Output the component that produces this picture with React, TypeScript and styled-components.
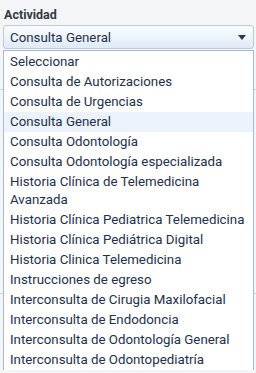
import React from "react";
import styled, { createGlobalStyle } from "styled-components";

const Global = createGlobalStyle`
  html, body { margin: 0; padding: 0; background: #f3f5f7; }
  body { font-family: Roboto, "Liberation Sans", Arial, sans-serif; }
`;

const Page = styled.div`
  position: relative;
  width: 256px;
  height: 373px;
  overflow: hidden;
`;

const Field = styled.div`
  display: flex;
  flex-direction: column;
  padding: 7px 2px 0 3px;
`;

const Label = styled.label`
  font-family: Roboto, "Liberation Sans", Arial, sans-serif;
  font-weight: 700;
  font-size: 12.5px;
  line-height: 15px;
  color: #333a44;
  padding-left: 1px;
  margin-bottom: 3px;
`;

const SelectBox = styled.div`
  height: 22px;
  border: 1px solid #bccadb;
  border-radius: 3px;
  background: linear-gradient(to bottom, #fbfdff 0%, #eef4fb 50%, #dfe9f5 100%);
  display: flex;
  align-items: center;
  justify-content: space-between;
  padding: 0 7px 0 6px;
  font-size: 13.3px;
  color: #22304a;
`;

const Arrow = styled.span`
  width: 0;
  height: 0;
  border-left: 4px solid transparent;
  border-right: 4px solid transparent;
  border-top: 5px solid #2b3650;
`;

const Under = styled.div`
  display: flex;
  flex-direction: column;
`;

const UnderBlock = styled.div<{ $h: number }>`
  height: ${(p) => p.$h}px;
  border-bottom: 1px solid #cfd4da;
`;

const List = styled.ul`
  position: absolute;
  left: 3px;
  top: 50px;
  width: 249px;
  margin: 0;
  padding: 1px 0 0;
  list-style: none;
  background: #ffffff;
  border: 1px solid #a9bbd4;
  border-bottom: none;
`;

const Item = styled.li<{ $active?: boolean }>`
  padding: 1px 6px 1px 6px;
  font-size: 13.3px;
  line-height: 18px;
  color: #22304a;
  background: ${(p) => (p.$active ? "#edf3fc" : "transparent")};
`;

const options = [
  "Seleccionar",
  "Consulta de Autorizaciones",
  "Consulta de Urgencias",
  "Consulta General",
  "Consulta Odontología",
  "Consulta Odontología especializada",
  "Historia Clínica de Telemedicina Avanzada",
  "Historia Clínica Pediatrica Telemedicina",
  "Historia Clínica Pediátrica Digital",
  "Historia Clinica Telemedicina",
  "Instrucciones de egreso",
  "Interconsulta de Cirugia Maxilofacial",
  "Interconsulta de Endodoncia",
  "Interconsulta de Odontología General",
  "Interconsulta de Odontopediatría",
];

export default function App() {
  return (
    <Page>
      <Global />
      <Field>
        <Label>Actividad</Label>
        <SelectBox>
          <span>Consulta General</span>
          <Arrow />
        </SelectBox>
      </Field>
      <Under>
        <UnderBlock $h={40} />
        <UnderBlock $h={203} />
      </Under>
      <List>
        {options.map((o) => (
          <Item key={o} $active={o === "Consulta General"}>
            {o}
          </Item>
        ))}
      </List>
    </Page>
  );
}
